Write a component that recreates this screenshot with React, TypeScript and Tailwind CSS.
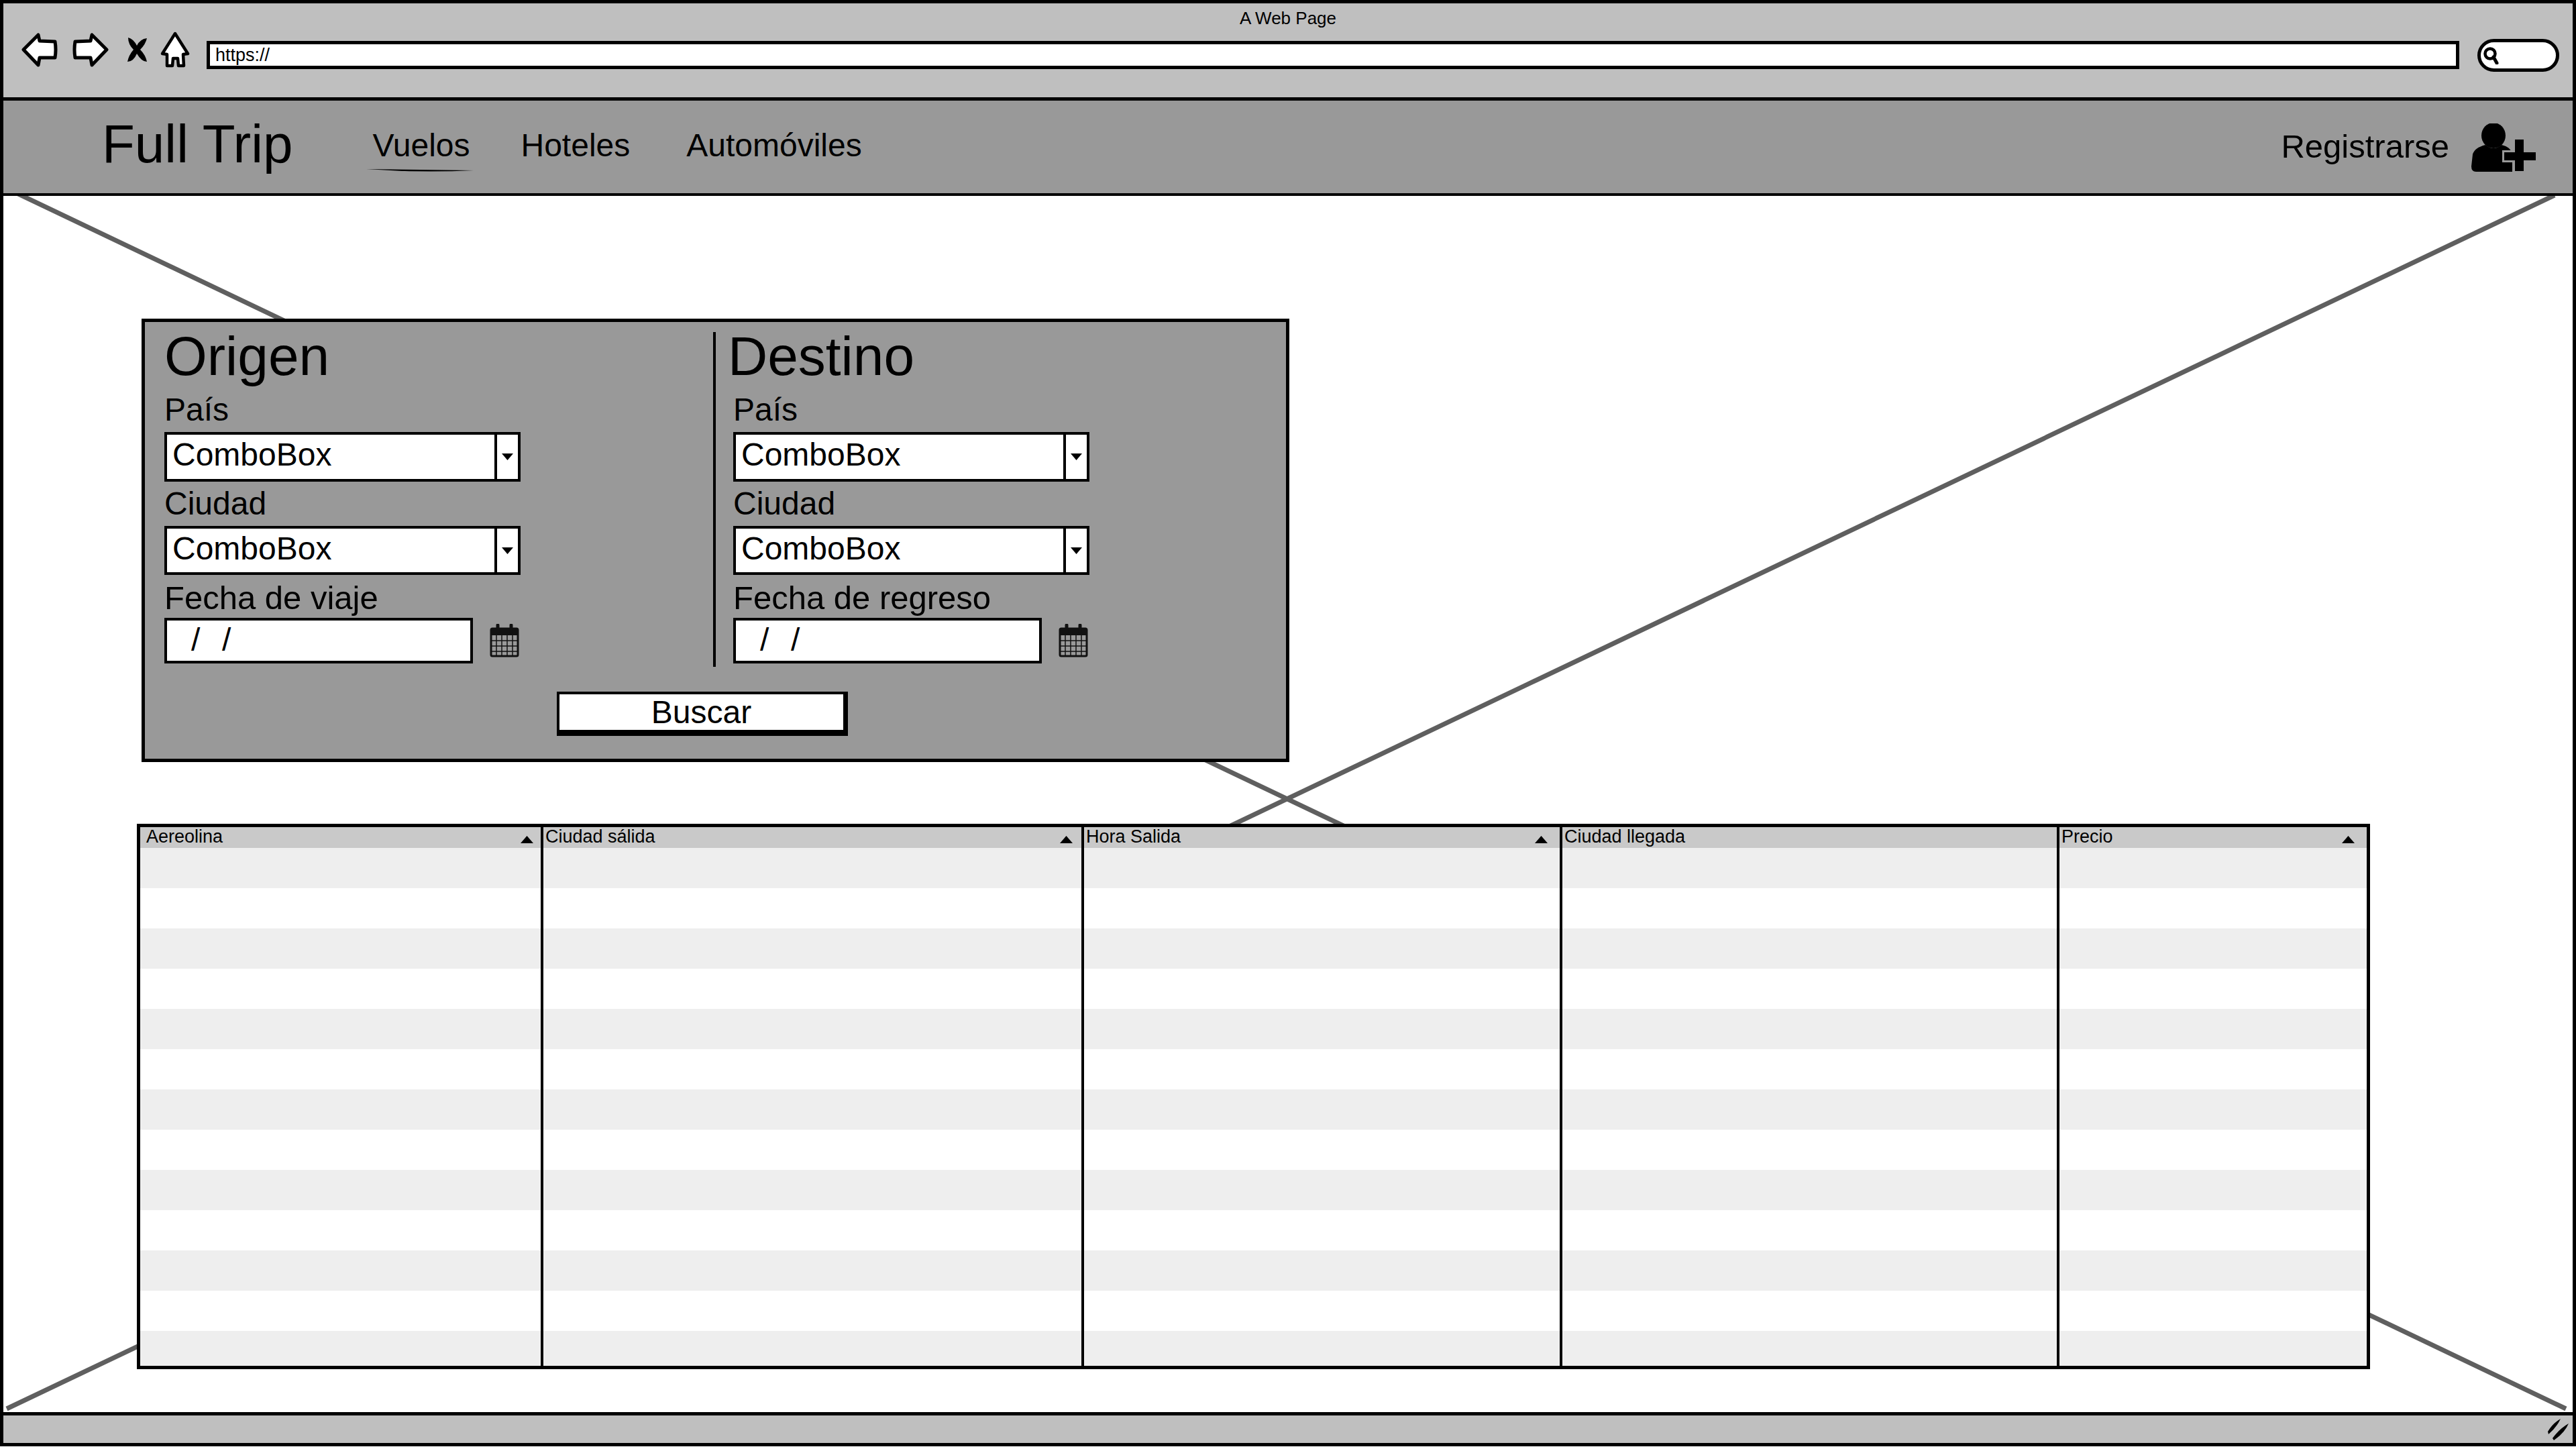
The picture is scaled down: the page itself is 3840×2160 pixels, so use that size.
const columns = [
  { title: 'Aereolina', width: 'w-[601px]', pad: 'pl-[9px] pr-[11px]', sorted: true },
  { title: 'Ciudad sálida', width: 'w-[806px]', pad: 'pl-[3px] pr-[13px]', sorted: true },
  { title: 'Hora Salida', width: 'w-[713px]', pad: 'pl-[3px] pr-[18px]', sorted: true },
  { title: 'Ciudad llegada', width: 'w-[741px]', pad: 'pl-[3px] pr-[12px]', sorted: false },
  { title: 'Precio', width: 'flex-1', pad: 'pl-[3px] pr-[18px]', sorted: true },
];

const rows = Array.from({ length: 13 }, (_, i) => i);

const Arrow = ({ flip }: { flip?: boolean }) => (
  <svg width="54" height="52" viewBox="0 0 54 52" className={flip ? '-scale-x-100' : ''}>
    <path
      d="M3 26 L25 4 L27 13 L50 14 Q52 26 50 38 L27 38 L25 49 Z"
      fill="white"
      stroke="black"
      strokeWidth="5"
      strokeLinejoin="round"
    />
  </svg>
);

const CloseIcon = () => (
  <svg width="31" height="36" viewBox="0 0 31 36">
    <path d="M2 0 Q10 2 15 12 Q20 2 30 1 Q28 10 20 18 Q28 26 30 36 Q22 36 15 24 Q10 36 1 36 Q3 26 10 18 Q2 10 2 0Z" fill="black" />
  </svg>
);

const HomeIcon = () => (
  <svg width="46" height="54" viewBox="0 0 46 54">
    <path
      d="M23 3 L42 33 L35 34 L36 51 L28 51 L27 40 L20 40 L19 51 L11 51 L11 34 L4 33Z"
      fill="white"
      stroke="black"
      strokeWidth="4.5"
      strokeLinejoin="round"
    />
  </svg>
);

const SearchIcon = () => (
  <svg width="24" height="26" viewBox="0 0 24 26">
    <circle cx="10" cy="10" r="7.5" fill="none" stroke="black" strokeWidth="4.5" />
    <path d="M15 15 L20 24" stroke="black" strokeWidth="5" strokeLinecap="round" />
  </svg>
);

const UserPlusIcon = () => (
  <svg width="98" height="72" viewBox="0 0 98 72">
    <ellipse cx="34" cy="18" rx="18" ry="19" fill="black" />
    <path d="M22 32 Q34 42 46 32 Q60 35 62 46 L62 72 L8 72 Q1 72 1 64 L3 46 Q6 36 22 32Z" fill="black" />
    <path d="M66 24 H79 V43 H97 V55 H79 V71 H66 V55 H50 V43 H66Z" fill="black" stroke="#999999" strokeWidth="6" paintOrder="stroke" />
  </svg>
);

const CalendarIcon = () => (
  <svg width="44" height="50" viewBox="0 0 44 50">
    <rect x="2" y="7" width="40" height="41" rx="2" fill="#999999" stroke="#111111" strokeWidth="3" />
    <rect x="2" y="7" width="40" height="10" fill="#111111" />
    <path d="M12 2 V12 M32 2 V12" stroke="#111111" strokeWidth="5" strokeLinecap="round" />
    <path d="M2 25 H42 M2 33 H42 M2 41 H42 M10 17 V48 M18 17 V48 M26 17 V48 M34 17 V48" stroke="#111111" strokeWidth="1.5" />
  </svg>
);

const SortArrow = () => (
  <svg width="19" height="11" viewBox="0 0 19 11" className="mt-[8px]">
    <path d="M9.5 0 L19 11 H0Z" fill="black" />
  </svg>
);

const ResizeGrip = () => (
  <svg width="34" height="34" viewBox="0 0 34 34">
    <path d="M1 20 Q8 8 20 1 Q14 14 2 24Z M8 30 Q18 16 32 8 Q26 22 10 33Z" fill="black" />
  </svg>
);

const ComboBox = () => (
  <div className="flex w-[531px] items-center border-[4px] border-black bg-white">
    <span className="flex-1 pb-[6px] pl-[8px] text-[48px] leading-none text-black">ComboBox</span>
    <div className="flex h-full w-[35px] items-center justify-center border-l-[4px] border-black">
      <svg width="17" height="10" viewBox="0 0 17 10">
        <path d="M0 0 H17 L8.5 10Z" fill="black" />
      </svg>
    </div>
  </div>
);

const Location = ({ title, dateLabel, divided }: { title: string; dateLabel: string; divided?: boolean }) => (
  <div className={divided ? 'flex h-[499px] flex-1 flex-col border-l-[4px] border-black pl-[26px]' : 'flex h-[499px] w-[818px] flex-col'}>
    <h2 className={divided ? '-ml-[8px] h-[72px] text-[82px] leading-[72px]' : 'h-[72px] text-[82px] leading-[72px]'}>{title}</h2>
    <label className="flex h-[77px] items-center pt-[10px] text-[48px] leading-none">País</label>
    <div className="flex h-[74px]"><ComboBox /></div>
    <label className="flex h-[66px] items-center text-[48px] leading-none">Ciudad</label>
    <div className="flex h-[73px]"><ComboBox /></div>
    <label className="flex h-[64px] items-center pt-[4px] text-[49px] leading-none">{dateLabel}</label>
    <div className="flex items-center gap-[25px]">
      <div className="flex h-[68px] w-[460px] items-center border-[4px] border-black bg-white pb-[2px] pl-[36px] text-[48px] leading-none tracking-[2px] whitespace-pre">/  /</div>
      <CalendarIcon />
    </div>
  </div>
);

export default function App() {
  return (
    <div className="h-[2160px] w-full bg-white font-['Liberation_Sans',sans-serif] text-black">
      <div className="flex h-[2156px] flex-col border-[5px] border-black">
        <header className="relative flex h-[145px] items-start border-b-[5px] border-black bg-[#bfbfbf] pl-[27px]">
          <p className="absolute top-[12px] left-0 w-full text-center text-[26px] leading-[20px]">A Web Page</p>
          <div className="mt-[42px] flex items-center">
            <Arrow />
            <div className="ml-[22px]"><Arrow flip /></div>
            <div className="ml-[27px]"><CloseIcon /></div>
            <div className="ml-[18px]"><HomeIcon /></div>
          </div>
          <div className="mt-[56px] ml-[24px] flex h-[42px] w-[3358px] items-center border-[5px] border-black bg-white pl-[8px] text-[27px] leading-none">https://</div>
          <div className="mt-[53px] ml-[27px] flex h-[49px] w-[122px] items-center rounded-full border-[5px] border-black bg-white pl-[4px]">
            <SearchIcon />
          </div>
        </header>

        <nav className="flex h-[142px] items-center border-b-[4px] border-black bg-[#999999] pb-[4px] pl-[147px] text-[48px] leading-none">
          <span className="pb-[4px] text-[80px] leading-none">Full Trip</span>
          <a className="relative ml-[119px]">
            Vuelos
            <svg width="160" height="6" viewBox="0 0 160 6" className="absolute top-[58px] -left-[10px]">
              <path d="M0 1 Q80 2 160 3 Q80 7 0 1Z" fill="black" />
            </svg>
          </a>
          <a className="ml-[76px]">Hoteles</a>
          <a className="ml-[84px]">Automóviles</a>
          <span className="mr-[32px] ml-auto pt-[2px] text-[49px]">Registrarse</span>
          <div className="mr-[54px] pt-[6px]"><UserPlusIcon /></div>
        </nav>

        <main className="relative flex-1 overflow-hidden">
          <svg className="absolute inset-0 h-full w-full" viewBox="0 0 3830 1813">
            <path d="M20 -4 L3820 1808 M3803 -1 L5 1808" stroke="#5f5f5f" strokeWidth="7" fill="none" />
          </svg>

          <section className="relative mt-[183px] ml-[206px] w-[1711px] border-[5px] border-black bg-[#999999] pt-[15px] pb-[34px] pl-[29px]">
            <div className="flex">
              <Location title="Origen" dateLabel="Fecha de viaje" />
              <Location title="Destino" dateLabel="Fecha de regreso" divided />
            </div>
            <button className="mt-[37px] ml-[585px] flex h-[66px] w-[434px] items-center justify-center border-t-[4px] border-r-[7px] border-b-[9px] border-l-[4px] border-black bg-white text-[48px] leading-none">
              Buscar
            </button>
          </section>

          <section className="relative mt-[92px] ml-[199px] flex h-[813px] w-[3329px] overflow-hidden border-[5px] border-black bg-white">
            {columns.map((col, i) => (
              <div key={col.title} className={col.width + (i < columns.length - 1 ? ' border-r-[4px] border-black' : '')}>
                <div className={'flex h-[31px] items-center justify-between bg-[#c9c9c9] pb-[3px] text-[27px] leading-none ' + col.pad}>
                  <span>{col.title}</span>
                  {col.sorted && <SortArrow />}
                </div>
                {rows.map((r) => (
                  <div key={r} className={r % 2 === 0 ? 'h-[60px] bg-[#eeeeee]' : 'h-[60px] bg-white'} />
                ))}
              </div>
            ))}
          </section>
        </main>

        <footer className="flex h-[46px] items-center justify-end border-t-[5px] border-black bg-[#bfbfbf] pr-[4px]">
          <ResizeGrip />
        </footer>
      </div>
    </div>
  );
}
